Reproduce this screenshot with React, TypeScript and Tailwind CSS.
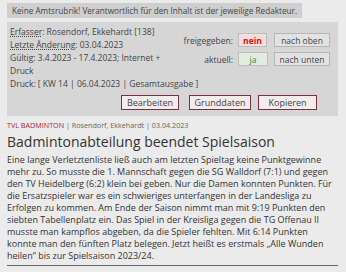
import React from "react";

export default function App() {
  return (
    <div className="w-[346px] h-[272px] overflow-hidden bg-[#ebebeb] text-[#333] font-['Open_Sans',sans-serif] px-[7px] pt-[3px]">
      <div className="w-fit h-[15px] bg-[#cfcfcf] px-[5px] text-[8.2px] leading-[15px] text-[#444]">
        Keine Amtsrubrik! Verantwortlich für den Inhalt ist der jeweilige Redakteur.
      </div>
      <div className="mt-[4px] w-[331px] bg-[#d6d6d6] pl-[3px] pr-[8px] pt-[3px] pb-[6px] text-[8.5px] leading-[13px] text-[#444]">
        <div className="flex">
          <div className="w-[160px]">
            <div>
              <span className="underline decoration-dotted">Erfasser</span>: Rosendorf, Ekkehardt [138]
            </div>
            <div>
              <span className="underline decoration-dotted">Letzte Änderung</span>: 03.04.2023
            </div>
            <div>Gültig: 3.4.2023 - 17.4.2023; Internet + Druck</div>
          </div>
          <div className="flex-1 pt-[8px] flex flex-col items-end gap-[5px]">
            <div className="flex items-center">
              <span className="mr-[5px]">freigegeben:</span>
              <span className="w-[29px] h-[14px] flex items-center justify-center bg-[#f1dede] border border-[#bdbdbd] text-[#d11] font-bold">nein</span>
              <span className="ml-[7px] w-[56px] h-[14px] flex items-center justify-center bg-[#e2e2e2] border border-[#b5b5b5]">nach oben</span>
            </div>
            <div className="flex items-center">
              <span className="mr-[5px]">aktuell:</span>
              <span className="w-[30px] h-[14px] flex items-center justify-center bg-[#e3ece3] border border-[#bdbdbd] text-[#2a8a2a]">ja</span>
              <span className="ml-[6px] w-[56px] h-[14px] flex items-center justify-center bg-[#e2e2e2] border border-[#b5b5b5]">nach unten</span>
            </div>
          </div>
        </div>
        <div>Druck: [ KW 14 | 06.04.2023 | Gesamtausgabe ]</div>
        <div className="flex justify-end mt-[5px] pr-[13px] text-[9px]">
          <span className="w-[58px] h-[15px] flex items-center justify-center bg-[#f3ecec] border border-[#7d2f41]">Bearbeiten</span>
          <span className="ml-[10px] w-[62px] h-[15px] flex items-center justify-center bg-[#f3ecec] border border-[#7d2f41]">Grunddaten</span>
          <span className="ml-[7px] w-[59px] h-[15px] flex items-center justify-center bg-[#f3ecec] border border-[#7d2f41]">Kopieren</span>
        </div>
      </div>
      <div className="w-[331px] border-b border-[#666] pb-[3px]">
        <div className="mt-[3px] text-[7.2px] leading-[12px] text-[#666]">
          <span className="text-[#a3243b]">TVL BADMINTON</span> | Rosendorf, Ekkehardt | 03.04.2023
        </div>
        <div className="mt-[1px] text-[14px] leading-[20px] text-[#333]">Badmintonabteilung beendet Spielsaison</div>
        <p className="mt-[2px] text-[9px] leading-[12px] text-[#333]">
          Eine lange Verletztenliste ließ auch am letzten Spieltag keine Punktgewinne mehr zu. So musste die 1. Mannschaft gegen die SG Walldorf (7:1) und gegen den TV Heidelberg (6:2) klein bei geben. Nur die Damen konnten Punkten. Für die Ersatzspieler war es ein schwieriges unterfangen in der Landesliga zu Erfolgen zu kommen. Am Ende der Saison nimmt man mit 9:19 Punkten den siebten Tabellenplatz ein. Das Spiel in der Kreisliga gegen die TG Offenau II musste man kampflos abgeben, da die Spieler fehlten. Mit 6:14 Punkten konnte man den fünften Platz belegen. Jetzt heißt es erstmals „Alle Wunden heilen“ bis zur Spielsaison 2023/24.
        </p>
      </div>
    </div>
  );
}
